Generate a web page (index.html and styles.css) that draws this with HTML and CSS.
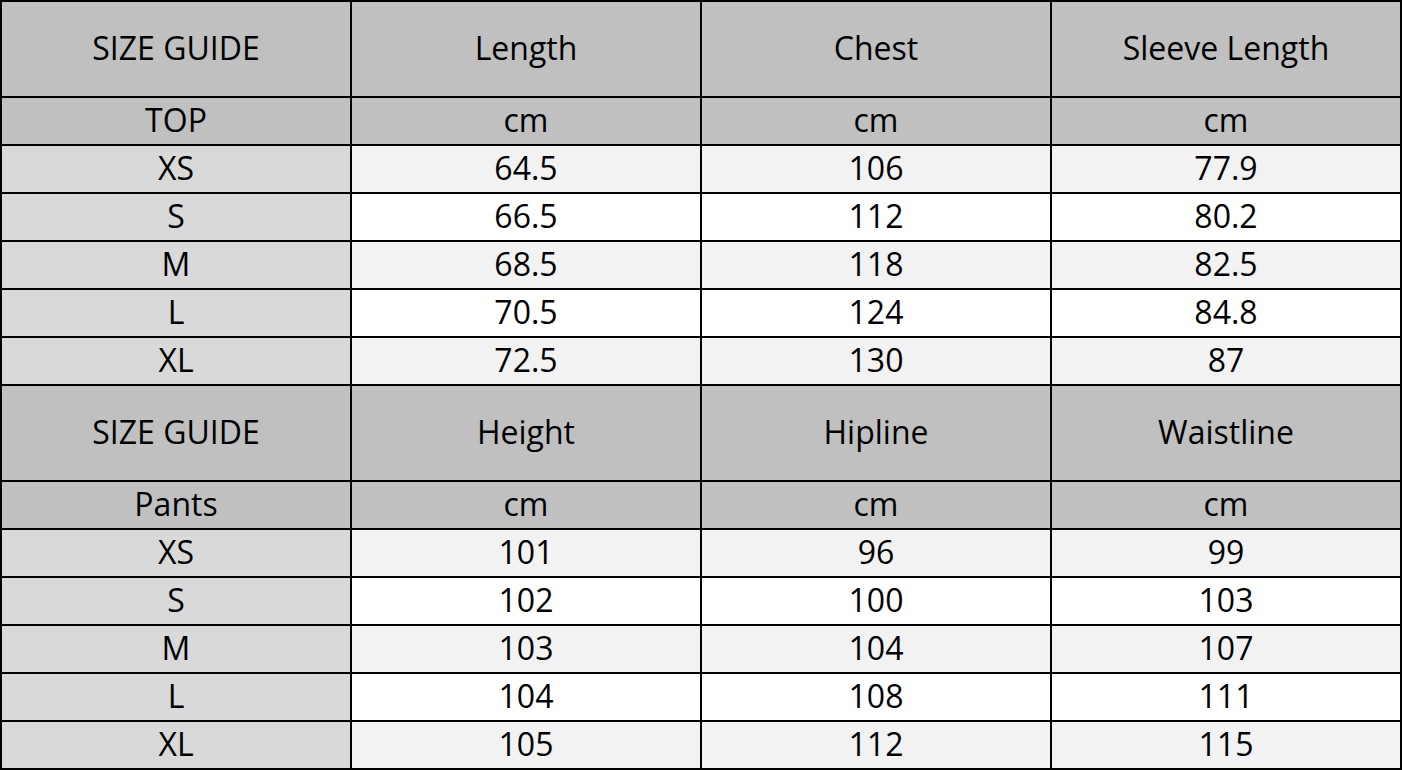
FILE: index.html
```html
<!DOCTYPE html>
<html>
<head>
<meta charset="utf-8">
<link rel="stylesheet" href="styles.css">
</head>
<body>
<table class="size-table">
  <tbody>
    <tr class="head"><td>SIZE GUIDE</td><td>Length</td><td>Chest</td><td>Sleeve Length</td></tr>
    <tr class="unit"><td>TOP</td><td>cm</td><td>cm</td><td>cm</td></tr>
    <tr class="alt"><td class="size">XS</td><td>64.5</td><td>106</td><td>77.9</td></tr>
    <tr><td class="size">S</td><td>66.5</td><td>112</td><td>80.2</td></tr>
    <tr class="alt"><td class="size">M</td><td>68.5</td><td>118</td><td>82.5</td></tr>
    <tr><td class="size">L</td><td>70.5</td><td>124</td><td>84.8</td></tr>
    <tr class="alt"><td class="size">XL</td><td>72.5</td><td>130</td><td>87</td></tr>
    <tr class="head"><td>SIZE GUIDE</td><td>Height</td><td>Hipline</td><td>Waistline</td></tr>
    <tr class="unit"><td>Pants</td><td>cm</td><td>cm</td><td>cm</td></tr>
    <tr class="alt"><td class="size">XS</td><td>101</td><td>96</td><td>99</td></tr>
    <tr><td class="size">S</td><td>102</td><td>100</td><td>103</td></tr>
    <tr class="alt"><td class="size">M</td><td>103</td><td>104</td><td>107</td></tr>
    <tr><td class="size">L</td><td>104</td><td>108</td><td>111</td></tr>
    <tr class="alt"><td class="size">XL</td><td>105</td><td>112</td><td>115</td></tr>
  </tbody>
</table>
</body>
</html>
```
FILE: styles.css
```css
html, body {
  margin: 0;
  padding: 0;
  background: #ffffff;
}
.size-table {
  border-collapse: separate;
  border-spacing: 2px;
  background: #000000;
  table-layout: fixed;
  width: 1402px;
  font-family: "Open Sans", "Noto Sans", sans-serif;
  font-size: 32px;
  color: #000000;
}
.size-table td {
  width: 348px;
  height: 46px;
  padding: 0 0 3px 0;
  box-sizing: border-box;
  text-align: center;
  vertical-align: middle;
  background: #ffffff;
  line-height: 1;
}
.size-table tr.alt td {
  background: #f2f2f2;
}
.size-table tr td.size {
  background: #d9d9d9;
}
.size-table tr.head td {
  height: 94px;
  background: #c0c0c0;
}
.size-table tr.unit td {
  background: #c0c0c0;
}
```
